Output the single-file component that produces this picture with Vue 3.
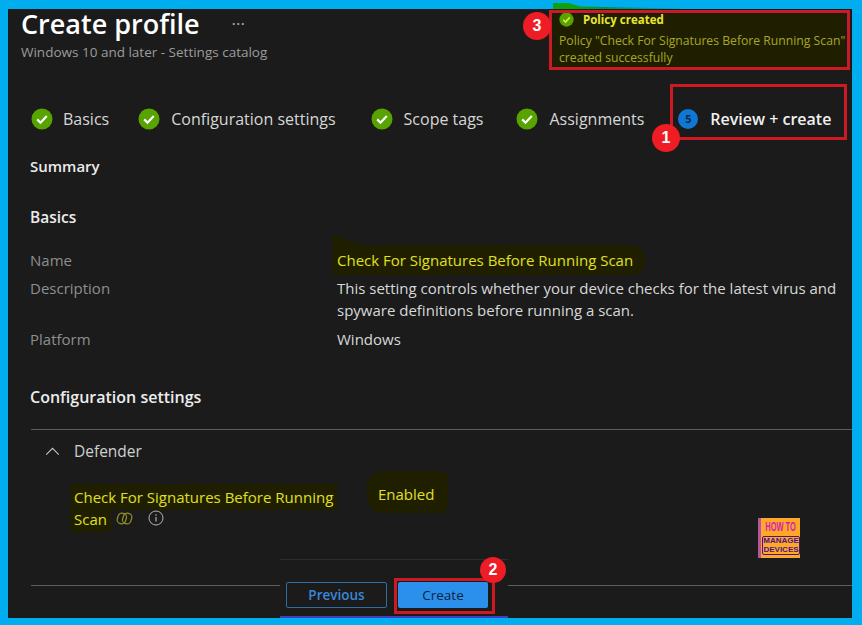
<template>
  <div class="screen">
    <div class="panel">
      <header class="page-head">
        <div class="title-row">
          <h1>Create profile</h1>
          <span class="more">···</span>
        </div>
        <p class="subtitle">Windows 10 and later - Settings catalog</p>
      </header>

      <nav class="steps">
        <div v-for="step in steps" :key="step" class="step">
          <svg class="check" viewBox="0 0 22 22">
            <circle cx="11" cy="11" r="10.5" fill="#57a300" />
            <path d="M6.2 11.4l3.3 3.3 6.3-6.8" fill="none" stroke="#fff" stroke-width="2.2" />
          </svg>
          <span>{{ step }}</span>
        </div>
        <div class="step current">
          <span class="step-num">5</span>
          <span>Review + create</span>
        </div>
      </nav>

      <h2 class="summary">Summary</h2>
      <h2 class="basics">Basics</h2>

      <div class="details">
        <div class="label">Name</div>
        <div class="value"><span class="hl hl-name">Check For Signatures Before Running Scan</span></div>
        <div class="label">Description</div>
        <div class="value">This setting controls whether your device checks for the latest virus and spyware definitions before running a scan.</div>
        <div class="label platform">Platform</div>
        <div class="value platform">Windows</div>
      </div>

      <h2 class="config">Configuration settings</h2>

      <section class="group">
        <div class="group-head">
          <svg class="chevron" viewBox="0 0 16 10">
            <path d="M1 8.5L8 1.5l7 7" fill="none" stroke="#c8c8c8" stroke-width="1.2" />
          </svg>
          <span>Defender</span>
        </div>
        <div class="setting">
          <div class="setting-name">
            <span class="hl">Check For Signatures Before Running</span><br />
            <span class="hl">Scan</span>
            <svg class="copilot" viewBox="0 0 16 16">
              <g fill="none" stroke="#8f8f24" stroke-width="1.2">
                <rect x="1.500" y="3" width="8" height="10" rx="3.500" transform="rotate(18 5.500 8)" />
                <rect x="6.500" y="3" width="8" height="10" rx="3.500" transform="rotate(18 10.500 8)" />
              </g>
            </svg>
            <svg class="info" viewBox="0 0 16 16">
              <circle cx="8" cy="8" r="7" fill="none" stroke="#b4b4b4" stroke-width="1" />
              <path d="M8 7v4.500M8 4.300v1.400" stroke="#b4b4b4" stroke-width="1.200" />
            </svg>
          </div>
          <div class="setting-value"><span class="hl hl-enabled">Enabled</span></div>
        </div>
        <div class="logo-row">
          <div class="logo">
            <span class="logo-top">HOW TO</span>
            <span class="logo-bottom">MANAGE<br />DEVICES</span>
          </div>
        </div>
      </section>

      <div class="bottom-rule"></div>

      <footer class="actions">
        <button class="btn-prev">Previous</button>
        <button class="btn-create">Create</button>
      </footer>

      <div class="toast">
        <div class="toast-title">
          <svg class="toast-check" viewBox="0 0 22 22">
            <circle cx="11" cy="11" r="10.500" fill="#57a300" />
            <path d="M6.200 11.400l3.300 3.300 6.300-6.800" fill="none" stroke="#e8e840" stroke-width="2.400" />
          </svg>
          <span>Policy created</span>
        </div>
        <p>Policy "Check For Signatures Before Running Scan"<br />created successfully</p>
      </div>
    </div>

    <!-- callouts drawn over the shot -->
    <div class="smear"></div>
    <div class="box box-review"></div>
    <div class="box box-toast"></div>
    <div class="box box-create"></div>
    <span class="badge badge-1">1</span>
    <span class="badge badge-2">2</span>
    <span class="badge badge-3">3</span>
  </div>
</template>

<script setup>
const steps = ['Basics', 'Configuration settings', 'Scope tags', 'Assignments']
</script>

<style>
html,
body {
  margin: 0;
  background: #00aeef;
}
</style>

<style scoped>
.screen {
  position: relative;
  width: 862px;
  height: 625px;
  padding: 9px 10px 7px 8px;
  box-sizing: border-box;
  background: #00aeef;
  overflow: hidden;
  font-family: "Open Sans", "Noto Sans", sans-serif;
  color: #d6d6d6;
}

.panel {
  position: relative;
  height: 100%;
  background: #1b1b1b;
}

.page-head {
  padding-left: 13px;
}

.title-row {
  display: flex;
  align-items: flex-start;
  height: 31px;
}

h1 {
  margin: 0;
  font-size: 27px;
  line-height: 30px;
  font-weight: 600;
  color: #fff;
}

.more {
  margin: 5px 0 0 32px;
  font-size: 17px;
  line-height: 20px;
  color: #b0b0b0;
}

.subtitle {
  margin: 3px 0 0;
  font-size: 13.5px;
  line-height: 18px;
  color: #9c9c9c;
}

.steps {
  display: flex;
  align-items: center;
  gap: 32px;
  margin-top: 47px;
  padding-left: 23px;
  height: 22px;
  font-size: 16px;
  white-space: nowrap;
}

.step {
  display: flex;
  align-items: center;
  gap: 11px;
}

.step:first-child {
  gap: 10px;
}

.step:nth-child(2) {
  margin-left: -3px;
}

.step:nth-child(3) {
  margin-left: 3px;
}

.step:nth-child(4) {
  margin-left: 1px;
}

.step:nth-child(5) {
  margin-left: 2px;
}

.check {
  width: 22px;
  height: 22px;
}

.step-num {
  width: 20px;
  height: 20px;
  border-radius: 50%;
  background: #0f78d4;
  color: #12294a;
  font-size: 11px;
  font-weight: 700;
  line-height: 20px;
  text-align: center;
}

.current {
  gap: 12px;
  font-weight: 600;
  color: #f0f0f0;
}

h2 {
  margin: 0;
  padding-left: 22px;
  font-size: 15px;
  line-height: 20px;
  font-weight: 600;
  color: #ececec;
}

.summary {
  margin-top: 26px;
}

.basics {
  margin-top: 31px;
  font-size: 15.5px;
}

.details {
  display: grid;
  grid-template-columns: 307px 1fr;
  padding-left: 22px;
  margin-top: 22px;
  font-size: 15px;
  line-height: 22px;
  row-gap: 6px;
}

.label {
  color: #8e8e8e;
}

.value {
  color: #d8d8d8;
  padding-right: 12px;
}

.platform {
  margin-top: 1px;
}

.hl {
  color: #e0e020;
  background: #1f1f00;
  padding: 3px 4px;
  margin-left: -4px;
  border-radius: 4px;
  box-decoration-break: clone;
}

.hl-name {
  position: relative;
  padding: 5px 12px 5px 4px;
  border-radius: 3px 14px 14px 3px;
}

.hl-name::before {
  content: "";
  position: absolute;
  left: -1px;
  top: -11px;
  width: 32px;
  height: 12px;
  background: #1f1f00;
  clip-path: polygon(0 0, 100% 100%, 0 100%);
}

.config {
  margin-top: 37px;
  font-size: 16px;
}

.group {
  margin: 22px 0 0 23px;
  border-top: 1px solid #5c5c5c;
}

.group-head {
  display: flex;
  align-items: center;
  height: 42px;
  font-size: 15.5px;
  color: #d0d0d0;
}

.chevron {
  width: 15px;
  height: 9px;
  margin: 0 14px 0 14px;
}

.setting {
  display: grid;
  grid-template-columns: 304px 1fr;
  padding-left: 43px;
  margin-top: 11px;
  font-size: 15px;
  line-height: 22px;
}

.setting-name {
  padding-top: 3px;
}

.hl-enabled {
  display: inline-block;
  padding: 12px 14px 8px 11px;
  margin: -13px 0 0 -11px;
  line-height: 22px;
  border-radius: 16px 6px 8px 16px;
}

.copilot {
  width: 17px;
  height: 17px;
  margin: 0 0 -2px 5px;
}

.info {
  width: 16px;
  height: 16px;
  margin: 0 0 -1px 15px;
}

.logo-row {
  display: flex;
  justify-content: flex-end;
  padding-right: 52px;
  margin-top: -12px;
}

.logo {
  width: 42px;
  height: 40px;
  box-sizing: border-box;
  padding: 3px 0 2px 1px;
  background: #ffa726;
  border-left: 3px solid #b455a0;
  display: flex;
  flex-direction: column;
  align-items: center;
  font-family: "Liberation Sans", sans-serif;
  font-weight: 700;
  line-height: 1;
}

.logo-top {
  font-size: 12px;
  line-height: 13px;
  color: #d21fb4;
  margin-bottom: 2px;
  white-space: nowrap;
  transform: scaleX(0.62);
}

.logo-bottom {
  width: 100%;
  box-sizing: border-box;
  font-size: 8px;
  line-height: 8.5px;
  color: #4a1486;
  border: 1px solid #4a1486;
  border-radius: 2px;
  text-align: center;
  white-space: nowrap;
  overflow: hidden;
}

.bottom-rule {
  margin: 27px 0 0 23px;
  border-top: 1px solid #5c5c5c;
}

.actions {
  position: absolute;
  left: 272px;
  bottom: 0;
  width: 228px;
  height: 59px;
  box-sizing: border-box;
  display: flex;
  gap: 11px;
  padding: 22px 0 0 6px;
  background: #1b1b1b;
  border-top: 1px solid #2e2e2e;
  border-bottom: 2px solid #3f3fc0;
}

.actions button {
  width: 101px;
  height: 26px;
  padding: 0;
  border-radius: 2px;
  font-family: inherit;
  font-size: 13.5px;
  font-weight: 600;
}

.btn-prev {
  background: #1b1b1b;
  border: 1px solid #2f6f9f;
  color: #3a86d8;
}

.actions .btn-create {
  width: 90px;
  background: #2a90ec;
  border: none;
  color: #10223c;
  font-weight: 400;
}

.toast {
  position: absolute;
  left: 545px;
  top: 5px;
  width: 292px;
  height: 54px;
  box-sizing: border-box;
  padding-left: 6px;
  background: #1f1f00;
  color: #a8a824;
  font-size: 12.2px;
  line-height: 17px;
}

.toast-title {
  display: flex;
  align-items: center;
  gap: 9px;
  height: 11px;
  font-weight: 700;
  color: #e6e632;
  font-size: 11.5px;
}

.toast-check {
  width: 15px;
  height: 15px;
}

.toast p {
  margin: 7px 0 0;
  white-space: nowrap;
}

.smear {
  position: absolute;
  left: 553px;
  top: 3px;
  width: 127px;
  height: 6px;
  background: linear-gradient(90deg, #0da30d 0 18%, #06913f 40%, #04a6b0 100%);
  clip-path: polygon(0 0, 12% 0, 22% 60%, 100% 90%, 100% 100%, 0 100%);
}

.box {
  position: absolute;
  box-sizing: border-box;
  border: 3px solid #cb1a22;
}

.box-review {
  left: 670px;
  top: 84px;
  width: 177px;
  height: 56px;
}

.box-toast {
  left: 549px;
  top: 10px;
  width: 301px;
  height: 60px;
}

.box-create {
  left: 394px;
  top: 578px;
  width: 101px;
  height: 36px;
}

.badge {
  position: absolute;
  width: 28px;
  height: 28px;
  border-radius: 50%;
  background: #ee1c25;
  color: #fff;
  font-family: "Liberation Sans", sans-serif;
  font-size: 16px;
  font-weight: 700;
  line-height: 28px;
  text-align: center;
}

.badge-1 {
  left: 652px;
  top: 124px;
}

.badge-2 {
  left: 480px;
  top: 557px;
  width: 26px;
  height: 26px;
  line-height: 26px;
}

.badge-3 {
  left: 523px;
  top: 12px;
}
</style>
